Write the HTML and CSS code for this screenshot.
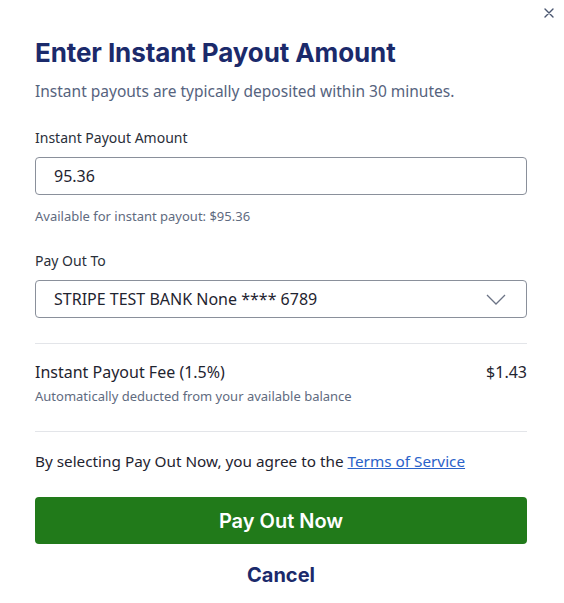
FILE: index.html
```html
<!DOCTYPE html>
<html>
<head>
<meta charset="utf-8">
<link rel="stylesheet" href="styles.css">
</head>
<body>
<div class="modal">
  <button class="close" aria-label="Close">
    <svg width="10" height="10" viewBox="0 0 10 10"><path d="M1 1L9 9M9 1L1 9" stroke="#4a5670" stroke-width="1.4" stroke-linecap="round"/></svg>
  </button>
  <h1 class="title">Enter Instant Payout Amount</h1>
  <p class="subtitle">Instant payouts are typically deposited within 30 minutes.</p>

  <div class="field">
    <label class="label">Instant Payout Amount</label>
    <div class="input">95.36</div>
    <div class="help">Available for instant payout: $95.36</div>
  </div>

  <div class="field field-select">
    <label class="label">Pay Out To</label>
    <div class="input select">
      <span>STRIPE TEST BANK None **** 6789</span>
      <svg width="20" height="11" viewBox="0 0 20 11"><path d="M1 1L10 10L19 1" fill="none" stroke="#6b7385" stroke-width="1.3"/></svg>
    </div>
  </div>

  <div class="fee">
    <div class="fee-row">
      <span>Instant Payout Fee (1.5%)</span>
      <span>$1.43</span>
    </div>
    <div class="help">Automatically deducted from your available balance</div>
  </div>

  <p class="terms">By selecting Pay Out Now, you agree to the <a href="#">Terms of Service</a></p>

  <button class="primary">Pay Out Now</button>
  <button class="cancel">Cancel</button>
</div>
</body>
</html>
```

FILE: styles.css
```css
* { box-sizing: border-box; }
html, body { margin: 0; padding: 0; background: #fff; }
body { font-family: "Noto Sans", "Open Sans", sans-serif; color: #1f2430; }
.modal { position: relative; width: 564px; padding: 36px 37px 0 35px; }
.close { position: absolute; top: 8px; right: 10px; width: 10px; height: 10px; padding: 0; border: 0; background: none; display: flex; }
.title { margin: 0; font-family: Inter, sans-serif; font-weight: 700; font-size: 26px; line-height: 34px; color: #1b2a6b; letter-spacing: -0.1px; }
.subtitle { margin: 10px 0 0; font-size: 15.5px; line-height: 22px; color: #56637e; }
.field { margin-top: 26px; }
.field-select { margin-top: 26px; }
.label { display: block; font-size: 14px; line-height: 20px; color: #2a2f3a; }
.input { margin-top: 9px; height: 38px; border: 1.5px solid #8a909b; border-radius: 4px; padding: 0 18px; display: flex; align-items: center; font-size: 16px; color: #1f2430; }
.select { justify-content: space-between; padding-right: 20px; }
.help { margin-top: 12px; font-size: 13px; line-height: 18px; color: #5f6b80; }
.fee { margin-top: 25px; border-top: 1px solid #e3e5e9; border-bottom: 1px solid #e3e5e9; padding: 17px 0 26px; }
.fee-row { display: flex; justify-content: space-between; font-size: 16px; line-height: 22px; color: #1f2430; }
.fee .help { margin-top: 4px; }
.terms { margin: 18px 0 0; font-size: 15.3px; line-height: 22px; color: #1f2430; }
.terms a { color: #2a62c9; text-decoration: underline; }
.primary { display: block; width: 100%; margin-top: 25px; height: 47px; border: 0; border-radius: 4px; background: #217a1a; color: #fff; font-family: Inter, sans-serif; font-weight: 600; font-size: 20px; }
.cancel { display: block; margin: 18px auto 0; border: 0; background: none; padding: 0; font-family: Inter, sans-serif; font-weight: 700; font-size: 20px; line-height: 26px; color: #1b2a6b; }
```
